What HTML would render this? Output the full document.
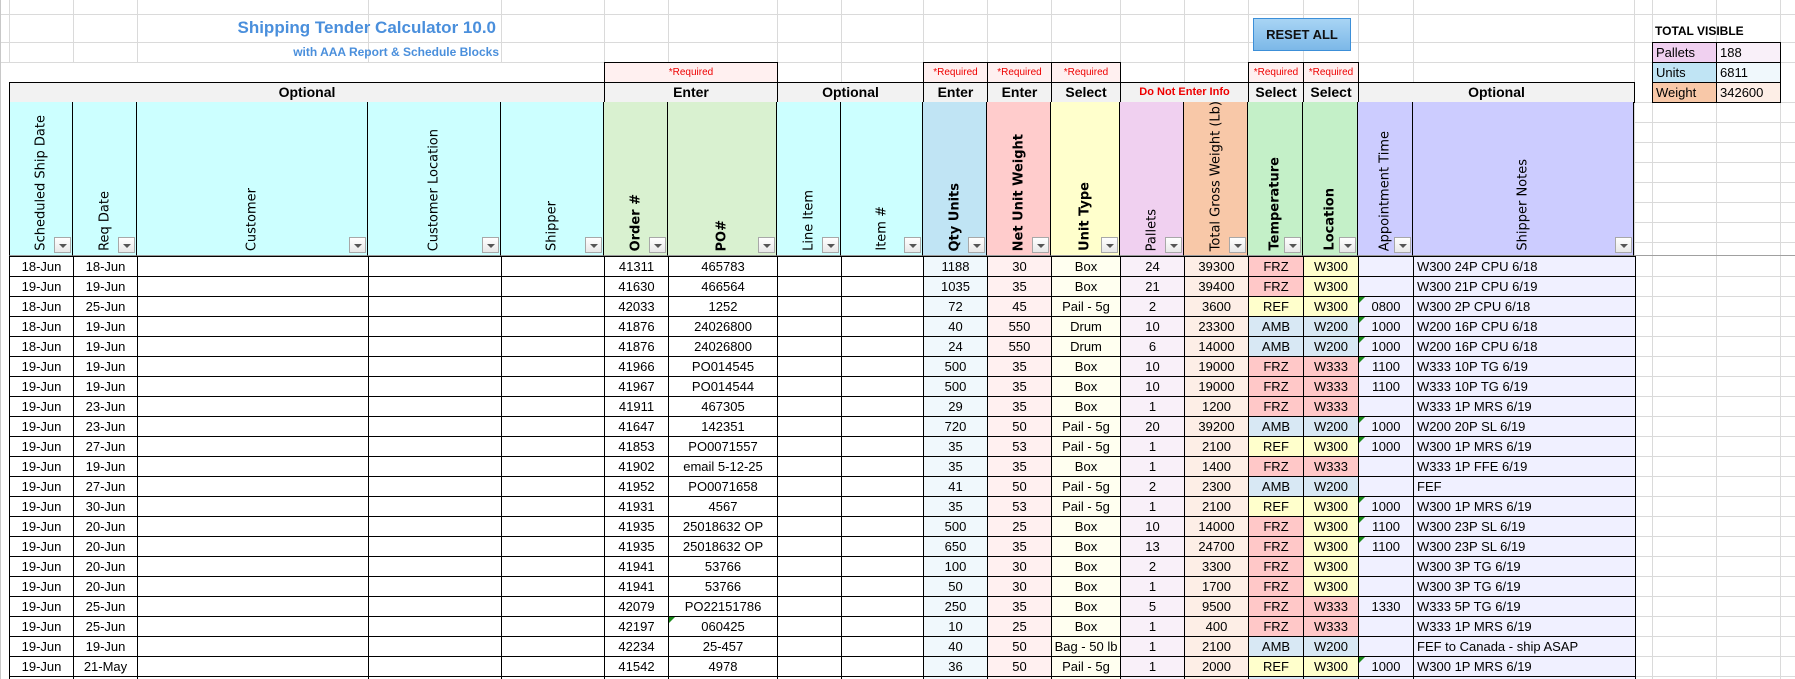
<!DOCTYPE html>
<html style="width:1795px;height:679px;overflow:hidden"><head><meta charset="utf-8">
<style>
*{box-sizing:border-box;margin:0;padding:0}
body{width:1795px;height:679px;overflow:hidden;background:#fff;font-family:"Liberation Sans",sans-serif;color:#000}
#w{position:relative;width:1795px;height:679px;overflow:hidden}
.a{position:absolute}
.gh{position:absolute;height:1px;background:#dadada}
.gv{position:absolute;width:1px;background:#dadada}
.req{position:absolute;top:62px;height:21px;border:1px solid #000;border-bottom:none;background:#fff0f0;color:#e00;font-size:10px;text-align:center;line-height:19px}
.band{position:absolute;top:82px;height:21px;border:1px solid #000;background:#f2f2f2;font-size:14px;font-weight:bold;text-align:center;line-height:19px}
.hd{position:absolute;top:102px;height:154px;border-right:1px solid #000;border-bottom:1px solid #999}
.hd span{position:absolute;bottom:4px;left:50%;writing-mode:vertical-rl;transform:translateX(-50%) rotate(180deg);font-family:"DejaVu Sans",sans-serif;font-size:13px;white-space:nowrap}
.hd span.b{font-weight:bold}
.fb{position:absolute;right:1px;bottom:2px;width:17px;height:16px;border:1px solid #a8a8a8;background:linear-gradient(#fff,#e8e8e8)}
.fb:after{content:"";position:absolute;left:4px;top:6px;border-left:4px solid transparent;border-right:4px solid transparent;border-top:4px solid #555}
table{position:absolute;left:9px;top:256px;border-collapse:collapse;table-layout:fixed;width:1626px}
td{height:20px;border:1px solid #000;font-size:13px;text-align:center;white-space:nowrap;overflow:hidden;padding:0;line-height:18px;position:relative}
td.n{text-align:left;padding-left:3px}
.c1{background:#f0f8fc}.c2{background:#fff0f0}.c3{background:#fffff0}.c4{background:#f9f0f9}.c5{background:#fdeee6}.c6{background:#f0f0ff}
.F{background:#ffc8c8}.R{background:#ffffcc}.A{background:#d8e8f4}
.g:before{content:"";position:absolute;left:0;top:0;border-top:6px solid #1a8a1a;border-right:6px solid transparent}
</style></head><body><div id="w">
<div class="gh" style="left:0;top:14px;width:1795px"></div>
<div class="gh" style="left:0;top:42px;width:1795px"></div>
<div class="gh" style="left:0;top:62px;width:1795px"></div>
<div class="gv" style="left:9px;top:0;height:62px"></div>
<div class="gv" style="left:73px;top:0;height:62px"></div>
<div class="gv" style="left:137px;top:0;height:62px"></div>
<div class="gv" style="left:368px;top:0;height:62px"></div>
<div class="gv" style="left:501px;top:0;height:62px"></div>
<div class="gv" style="left:604px;top:0;height:62px"></div>
<div class="gv" style="left:668px;top:0;height:62px"></div>
<div class="gv" style="left:777px;top:0;height:82px"></div>
<div class="gv" style="left:841px;top:0;height:82px"></div>
<div class="gv" style="left:923px;top:0;height:62px"></div>
<div class="gv" style="left:987px;top:0;height:62px"></div>
<div class="gv" style="left:1051px;top:0;height:62px"></div>
<div class="gv" style="left:1120px;top:0;height:82px"></div>
<div class="gv" style="left:1184px;top:0;height:82px"></div>
<div class="gv" style="left:1248px;top:0;height:62px"></div>
<div class="gv" style="left:1303px;top:0;height:62px"></div>
<div class="gv" style="left:1358px;top:0;height:82px"></div>
<div class="gv" style="left:1413px;top:0;height:82px"></div>
<div class="gv" style="left:1634px;top:0;height:679px"></div>
<div class="gv" style="left:1652px;top:0;height:679px"></div>
<div class="gv" style="left:1716px;top:0;height:679px"></div>
<div class="gv" style="left:1780px;top:0;height:679px"></div>
<div class="gv" style="left:0;top:0;height:679px;background:#c8c8c8"></div>
<div class="a" style="left:1634px;top:255px;width:161px;height:1px;background:#a0a0a0"></div>
<div class="gh" style="left:1634px;top:276px;width:161px"></div><div class="gh" style="left:1634px;top:296px;width:161px"></div><div class="gh" style="left:1634px;top:316px;width:161px"></div><div class="gh" style="left:1634px;top:336px;width:161px"></div><div class="gh" style="left:1634px;top:356px;width:161px"></div><div class="gh" style="left:1634px;top:376px;width:161px"></div><div class="gh" style="left:1634px;top:396px;width:161px"></div><div class="gh" style="left:1634px;top:416px;width:161px"></div><div class="gh" style="left:1634px;top:436px;width:161px"></div><div class="gh" style="left:1634px;top:456px;width:161px"></div><div class="gh" style="left:1634px;top:476px;width:161px"></div><div class="gh" style="left:1634px;top:496px;width:161px"></div><div class="gh" style="left:1634px;top:516px;width:161px"></div><div class="gh" style="left:1634px;top:536px;width:161px"></div><div class="gh" style="left:1634px;top:556px;width:161px"></div><div class="gh" style="left:1634px;top:576px;width:161px"></div><div class="gh" style="left:1634px;top:596px;width:161px"></div><div class="gh" style="left:1634px;top:616px;width:161px"></div><div class="gh" style="left:1634px;top:636px;width:161px"></div><div class="gh" style="left:1634px;top:656px;width:161px"></div><div class="gh" style="left:1634px;top:676px;width:161px"></div>
<div class="gh" style="left:1634px;top:102px;width:161px"></div><div class="gh" style="left:1634px;top:122px;width:161px"></div><div class="gh" style="left:1634px;top:142px;width:161px"></div><div class="gh" style="left:1634px;top:162px;width:161px"></div><div class="gh" style="left:1634px;top:182px;width:161px"></div><div class="gh" style="left:1634px;top:202px;width:161px"></div><div class="gh" style="left:1634px;top:222px;width:161px"></div><div class="gh" style="left:1634px;top:242px;width:161px"></div>

<div class="a" style="left:214px;top:18px;width:282px;text-align:right;font-size:17px;font-weight:bold;color:#4a8fdc;white-space:nowrap">Shipping Tender Calculator 10.0</div>
<div class="a" style="left:260px;top:45px;width:239px;text-align:right;font-size:12px;font-weight:bold;color:#4a8fdc;white-space:nowrap">with AAA Report &amp; Schedule Blocks</div>

<div class="a" style="left:1253px;top:18px;width:98px;height:33px;border:1px solid #3c8fd8;background:linear-gradient(#a8d4f4,#7cb8e8);font-size:13px;font-weight:bold;text-align:center;line-height:31px;color:#111">RESET ALL</div>

<div class="a" style="left:1655px;top:24px;font-size:12px;font-weight:bold">TOTAL VISIBLE</div>
<div class="a" style="left:1652px;top:42px;width:129px;height:61px;border:1px solid #000"></div>
<div class="a" style="left:1653px;top:43px;width:63px;height:19px;background:#f0d0f0;font-size:13px;padding-left:3px;line-height:19px">Pallets</div>
<div class="a" style="left:1717px;top:43px;width:63px;height:19px;background:#f9f0f9;font-size:13px;padding-left:3px;line-height:19px">188</div>
<div class="a" style="left:1653px;top:63px;width:63px;height:19px;background:#c0e4f4;font-size:13px;padding-left:3px;line-height:19px">Units</div>
<div class="a" style="left:1717px;top:63px;width:63px;height:19px;background:#f0f8fc;font-size:13px;padding-left:3px;line-height:19px">6811</div>
<div class="a" style="left:1653px;top:83px;width:63px;height:19px;background:#f8c8a8;font-size:13px;padding-left:3px;line-height:19px">Weight</div>
<div class="a" style="left:1717px;top:83px;width:63px;height:19px;background:#fdeee6;font-size:13px;padding-left:3px;line-height:19px">342600</div>
<div class="a" style="left:1716px;top:42px;width:1px;height:61px;background:#000"></div>
<div class="a" style="left:1652px;top:62px;width:129px;height:1px;background:#000"></div>
<div class="a" style="left:1652px;top:82px;width:129px;height:1px;background:#000"></div>

<div class="req" style="left:604px;width:174px">*Required</div>
<div class="req" style="left:923px;width:65px">*Required</div>
<div class="req" style="left:987px;width:65px">*Required</div>
<div class="req" style="left:1051px;width:70px">*Required</div>
<div class="req" style="left:1248px;width:56px">*Required</div>
<div class="req" style="left:1303px;width:56px">*Required</div>

<div class="band" style="left:9px;width:596px">Optional</div>
<div class="band" style="left:604px;width:174px">Enter</div>
<div class="band" style="left:777px;width:147px">Optional</div>
<div class="band" style="left:923px;width:65px">Enter</div>
<div class="band" style="left:987px;width:65px">Enter</div>
<div class="band" style="left:1051px;width:70px">Select</div>
<div class="band" style="left:1120px;width:129px;color:#e00;font-size:11px">Do Not Enter Info</div>
<div class="band" style="left:1248px;width:56px">Select</div>
<div class="band" style="left:1303px;width:56px">Select</div>
<div class="band" style="left:1358px;width:277px">Optional</div>

<div class="hd" style="left:9px;width:64px;background:#ccffff;border-left:1px solid #000"><span>Scheduled Ship Date</span><div class="fb"></div></div>
<div class="hd" style="left:73px;width:64px;background:#ccffff"><span>Req Date</span><div class="fb"></div></div>
<div class="hd" style="left:137px;width:231px;background:#ccffff"><span>Customer</span><div class="fb"></div></div>
<div class="hd" style="left:368px;width:133px;background:#ccffff"><span>Customer Location</span><div class="fb"></div></div>
<div class="hd" style="left:501px;width:103px;background:#ccffff"><span>Shipper</span><div class="fb"></div></div>
<div class="hd" style="left:604px;width:64px;background:#d9f1d0"><span class="b">Order #</span><div class="fb"></div></div>
<div class="hd" style="left:668px;width:109px;background:#d9f1d0"><span class="b">PO#</span><div class="fb"></div></div>
<div class="hd" style="left:777px;width:64px;background:#ccffff"><span>Line Item</span><div class="fb"></div></div>
<div class="hd" style="left:841px;width:82px;background:#ccffff"><span>Item #</span><div class="fb"></div></div>
<div class="hd" style="left:923px;width:64px;background:#c0e4f4"><span class="b">Qty Units</span><div class="fb"></div></div>
<div class="hd" style="left:987px;width:64px;background:#ffcccc"><span class="b">Net Unit Weight</span><div class="fb"></div></div>
<div class="hd" style="left:1051px;width:69px;background:#ffffcc"><span class="b">Unit Type</span><div class="fb"></div></div>
<div class="hd" style="left:1120px;width:64px;background:#f0d0f0"><span>Pallets</span><div class="fb"></div></div>
<div class="hd" style="left:1184px;width:64px;background:#f8c8a8"><span>Total Gross Weight (Lb)</span><div class="fb"></div></div>
<div class="hd" style="left:1248px;width:55px;background:#c4f0c8"><span class="b">Temperature</span><div class="fb"></div></div>
<div class="hd" style="left:1303px;width:55px;background:#c4f0c8"><span class="b">Location</span><div class="fb"></div></div>
<div class="hd" style="left:1358px;width:55px;background:#ccccff"><span>Appointment Time</span><div class="fb"></div></div>
<div class="hd" style="left:1413px;width:221px;background:#ccccff"><span>Shipper Notes</span><div class="fb"></div></div>

<table>
<colgroup><col style="width:64px"><col style="width:64px"><col style="width:231px"><col style="width:133px"><col style="width:103px"><col style="width:64px"><col style="width:109px"><col style="width:64px"><col style="width:82px"><col style="width:64px"><col style="width:64px"><col style="width:69px"><col style="width:64px"><col style="width:64px"><col style="width:55px"><col style="width:55px"><col style="width:55px"><col style="width:222px"></colgroup>
<tr><td>18-Jun</td><td>18-Jun</td><td></td><td></td><td></td><td>41311</td><td>465783</td><td></td><td></td><td class="c1">1188</td><td class="c2">30</td><td class="c3">Box</td><td class="c4">24</td><td class="c5">39300</td><td class="F">FRZ</td><td class="R">W300</td><td class="c6"></td><td class="c6 n">W300 24P CPU 6/18</td></tr>
<tr><td>19-Jun</td><td>19-Jun</td><td></td><td></td><td></td><td>41630</td><td>466564</td><td></td><td></td><td class="c1">1035</td><td class="c2">35</td><td class="c3">Box</td><td class="c4">21</td><td class="c5">39400</td><td class="F">FRZ</td><td class="R">W300</td><td class="c6"></td><td class="c6 n">W300 21P CPU 6/19</td></tr>
<tr><td>18-Jun</td><td>25-Jun</td><td></td><td></td><td></td><td>42033</td><td>1252</td><td></td><td></td><td class="c1">72</td><td class="c2">45</td><td class="c3">Pail - 5g</td><td class="c4">2</td><td class="c5">3600</td><td class="R">REF</td><td class="R">W300</td><td class="c6 g">0800</td><td class="c6 n">W300 2P CPU 6/18</td></tr>
<tr><td>18-Jun</td><td>19-Jun</td><td></td><td></td><td></td><td>41876</td><td>24026800</td><td></td><td></td><td class="c1">40</td><td class="c2">550</td><td class="c3">Drum</td><td class="c4">10</td><td class="c5">23300</td><td class="A">AMB</td><td class="A">W200</td><td class="c6 g">1000</td><td class="c6 n">W200 16P CPU 6/18</td></tr>
<tr><td>18-Jun</td><td>19-Jun</td><td></td><td></td><td></td><td>41876</td><td>24026800</td><td></td><td></td><td class="c1">24</td><td class="c2">550</td><td class="c3">Drum</td><td class="c4">6</td><td class="c5">14000</td><td class="A">AMB</td><td class="A">W200</td><td class="c6 g">1000</td><td class="c6 n">W200 16P CPU 6/18</td></tr>
<tr><td>19-Jun</td><td>19-Jun</td><td></td><td></td><td></td><td>41966</td><td>PO014545</td><td></td><td></td><td class="c1">500</td><td class="c2">35</td><td class="c3">Box</td><td class="c4">10</td><td class="c5">19000</td><td class="F">FRZ</td><td class="F">W333</td><td class="c6 g">1100</td><td class="c6 n">W333 10P TG 6/19</td></tr>
<tr><td>19-Jun</td><td>19-Jun</td><td></td><td></td><td></td><td>41967</td><td>PO014544</td><td></td><td></td><td class="c1">500</td><td class="c2">35</td><td class="c3">Box</td><td class="c4">10</td><td class="c5">19000</td><td class="F">FRZ</td><td class="F">W333</td><td class="c6">1100</td><td class="c6 n">W333 10P TG 6/19</td></tr>
<tr><td>19-Jun</td><td>23-Jun</td><td></td><td></td><td></td><td>41911</td><td>467305</td><td></td><td></td><td class="c1">29</td><td class="c2">35</td><td class="c3">Box</td><td class="c4">1</td><td class="c5">1200</td><td class="F">FRZ</td><td class="F">W333</td><td class="c6"></td><td class="c6 n">W333 1P MRS 6/19</td></tr>
<tr><td>19-Jun</td><td>23-Jun</td><td></td><td></td><td></td><td>41647</td><td>142351</td><td></td><td></td><td class="c1">720</td><td class="c2">50</td><td class="c3">Pail - 5g</td><td class="c4">20</td><td class="c5">39200</td><td class="A">AMB</td><td class="A">W200</td><td class="c6 g">1000</td><td class="c6 n">W200 20P SL 6/19</td></tr>
<tr><td>19-Jun</td><td>27-Jun</td><td></td><td></td><td></td><td>41853</td><td>PO0071557</td><td></td><td></td><td class="c1">35</td><td class="c2">53</td><td class="c3">Pail - 5g</td><td class="c4">1</td><td class="c5">2100</td><td class="R">REF</td><td class="R">W300</td><td class="c6 g">1000</td><td class="c6 n">W300 1P MRS 6/19</td></tr>
<tr><td>19-Jun</td><td>19-Jun</td><td></td><td></td><td></td><td>41902</td><td>email 5-12-25</td><td></td><td></td><td class="c1">35</td><td class="c2">35</td><td class="c3">Box</td><td class="c4">1</td><td class="c5">1400</td><td class="F">FRZ</td><td class="F">W333</td><td class="c6"></td><td class="c6 n">W333 1P FFE 6/19</td></tr>
<tr><td>19-Jun</td><td>27-Jun</td><td></td><td></td><td></td><td>41952</td><td>PO0071658</td><td></td><td></td><td class="c1">41</td><td class="c2">50</td><td class="c3">Pail - 5g</td><td class="c4">2</td><td class="c5">2300</td><td class="A">AMB</td><td class="A">W200</td><td class="c6"></td><td class="c6 n">FEF</td></tr>
<tr><td>19-Jun</td><td>30-Jun</td><td></td><td></td><td></td><td>41931</td><td>4567</td><td></td><td></td><td class="c1">35</td><td class="c2">53</td><td class="c3">Pail - 5g</td><td class="c4">1</td><td class="c5">2100</td><td class="R">REF</td><td class="R">W300</td><td class="c6 g">1000</td><td class="c6 n">W300 1P MRS 6/19</td></tr>
<tr><td>19-Jun</td><td>20-Jun</td><td></td><td></td><td></td><td>41935</td><td>25018632 OP</td><td></td><td></td><td class="c1">500</td><td class="c2">25</td><td class="c3">Box</td><td class="c4">10</td><td class="c5">14000</td><td class="F">FRZ</td><td class="R">W300</td><td class="c6 g">1100</td><td class="c6 n">W300 23P SL 6/19</td></tr>
<tr><td>19-Jun</td><td>20-Jun</td><td></td><td></td><td></td><td>41935</td><td>25018632 OP</td><td></td><td></td><td class="c1">650</td><td class="c2">35</td><td class="c3">Box</td><td class="c4">13</td><td class="c5">24700</td><td class="F">FRZ</td><td class="R">W300</td><td class="c6 g">1100</td><td class="c6 n">W300 23P SL 6/19</td></tr>
<tr><td>19-Jun</td><td>20-Jun</td><td></td><td></td><td></td><td>41941</td><td>53766</td><td></td><td></td><td class="c1">100</td><td class="c2">30</td><td class="c3">Box</td><td class="c4">2</td><td class="c5">3300</td><td class="F">FRZ</td><td class="R">W300</td><td class="c6"></td><td class="c6 n">W300 3P TG 6/19</td></tr>
<tr><td>19-Jun</td><td>20-Jun</td><td></td><td></td><td></td><td>41941</td><td>53766</td><td></td><td></td><td class="c1">50</td><td class="c2">30</td><td class="c3">Box</td><td class="c4">1</td><td class="c5">1700</td><td class="F">FRZ</td><td class="R">W300</td><td class="c6"></td><td class="c6 n">W300 3P TG 6/19</td></tr>
<tr><td>19-Jun</td><td>25-Jun</td><td></td><td></td><td></td><td>42079</td><td>PO22151786</td><td></td><td></td><td class="c1">250</td><td class="c2">35</td><td class="c3">Box</td><td class="c4">5</td><td class="c5">9500</td><td class="F">FRZ</td><td class="F">W333</td><td class="c6">1330</td><td class="c6 n">W333 5P TG 6/19</td></tr>
<tr><td>19-Jun</td><td>25-Jun</td><td></td><td></td><td></td><td>42197</td><td class="g">060425</td><td></td><td></td><td class="c1">10</td><td class="c2">25</td><td class="c3">Box</td><td class="c4">1</td><td class="c5">400</td><td class="F">FRZ</td><td class="F">W333</td><td class="c6"></td><td class="c6 n">W333 1P MRS 6/19</td></tr>
<tr><td>19-Jun</td><td>19-Jun</td><td></td><td></td><td></td><td>42234</td><td>25-457</td><td></td><td></td><td class="c1">40</td><td class="c2">50</td><td class="c3">Bag - 50 lb</td><td class="c4">1</td><td class="c5">2100</td><td class="A">AMB</td><td class="A">W200</td><td class="c6"></td><td class="c6 n">FEF to Canada - ship ASAP</td></tr>
<tr><td>19-Jun</td><td>21-May</td><td></td><td></td><td></td><td>41542</td><td>4978</td><td></td><td></td><td class="c1">36</td><td class="c2">50</td><td class="c3">Pail - 5g</td><td class="c4">1</td><td class="c5">2000</td><td class="R">REF</td><td class="R">W300</td><td class="c6 g">1000</td><td class="c6 n">W300 1P MRS 6/19</td></tr>
<tr><td></td><td></td><td></td><td></td><td></td><td></td><td></td><td></td><td></td><td class="c1"></td><td class="c2"></td><td class="c3"></td><td class="c4"></td><td class="c5"></td><td class="A"></td><td class="A"></td><td class="c6"></td><td class="c6"></td></tr>
</table>
</div></body></html>
